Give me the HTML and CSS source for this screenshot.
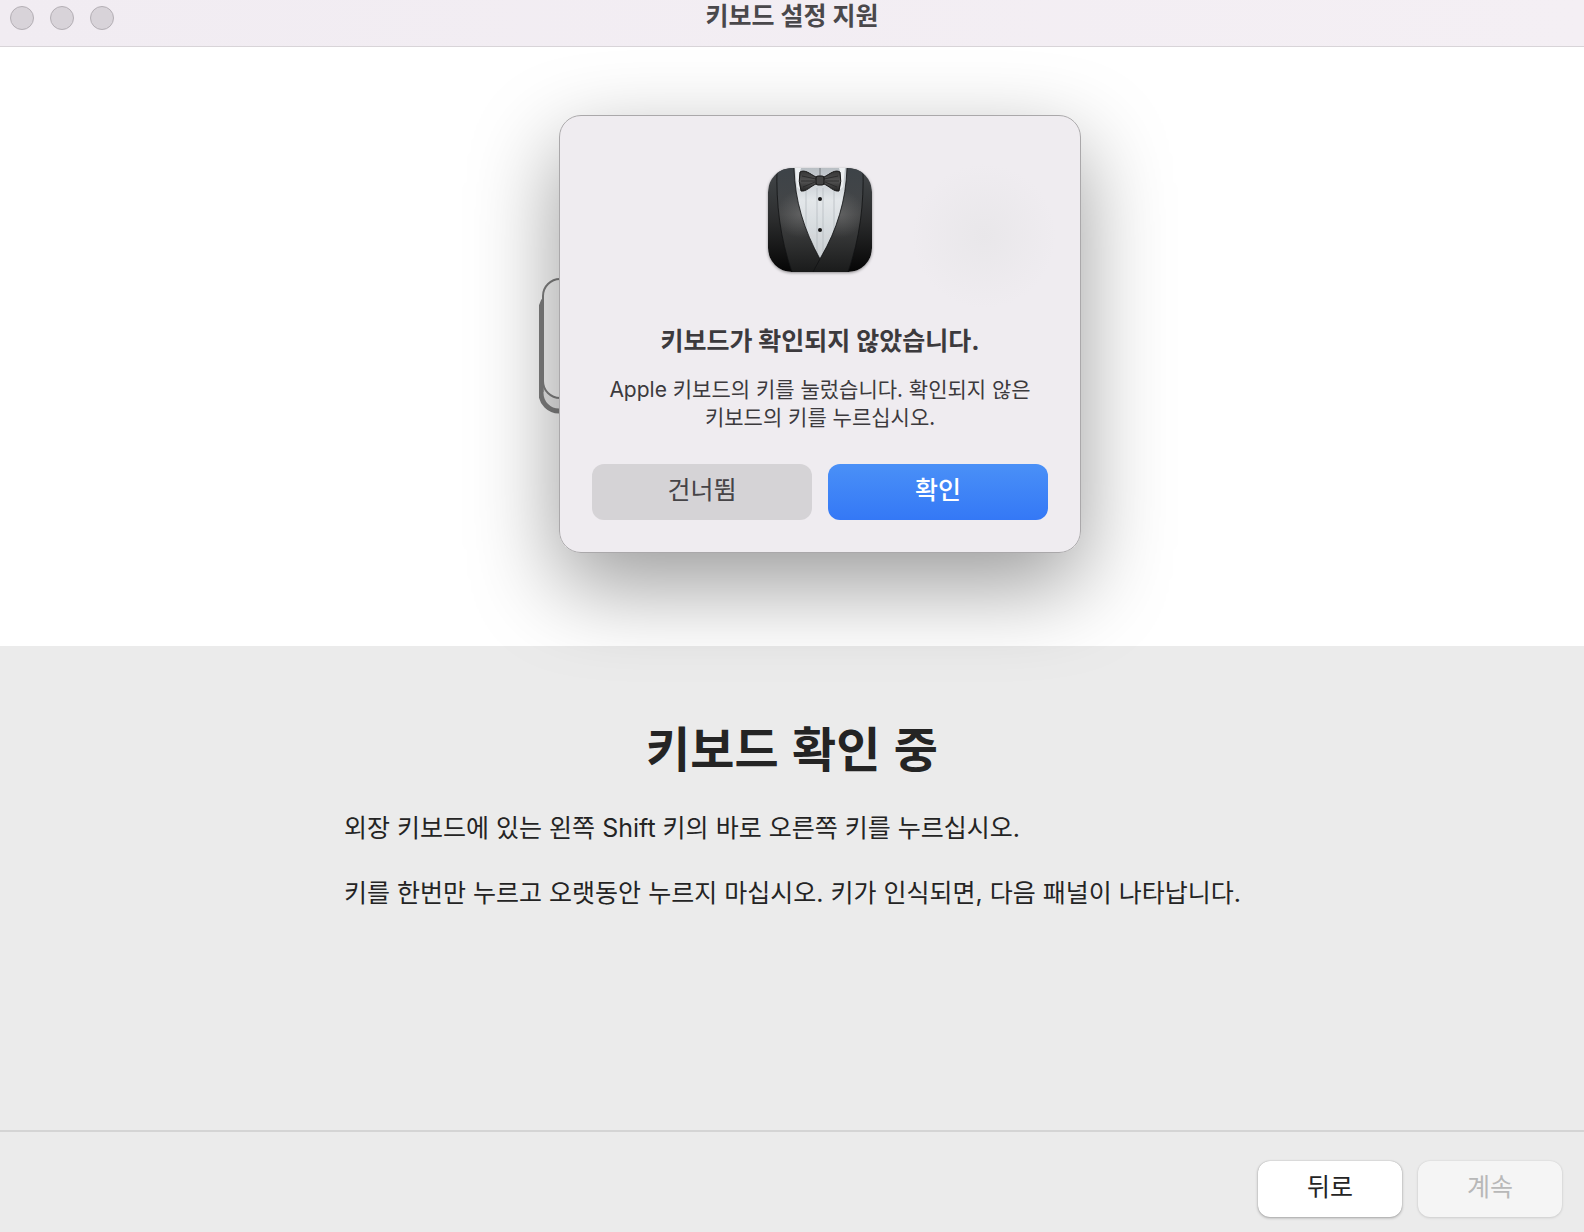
FILE: index.html
```html
<!DOCTYPE html>
<html lang="ko">
<head>
  <meta charset="utf-8">
  <meta name="viewport" content="width=device-width, initial-scale=1">
  <title>키보드 설정 지원</title>
  <link rel="stylesheet" href="styles.css">
</head>
<body>
  <div class="window">
    <header class="titlebar">
      <div class="window-controls">
        <button class="window-control" type="button" aria-label="닫기" disabled></button>
        <button class="window-control" type="button" aria-label="최소화" disabled></button>
        <button class="window-control" type="button" aria-label="확대" disabled></button>
      </div>
      <h1 class="window-title">키보드 설정 지원</h1>
    </header>

    <section class="stage">
      <svg class="keycap" viewBox="0 0 506 136" aria-hidden="true">
        <rect x="2" y="14" width="502" height="119" rx="18" fill="#ececec" stroke="#808080" stroke-width="5"/>
        <path d="M2 30V114" stroke="#808080" stroke-width="5"/>
        <rect x="4" y="1" width="498" height="119" rx="17" fill="#fafafa" stroke="#808080" stroke-width="2"/>
      </svg>
    </section>

    <main class="content">
      <h2 class="heading">키보드 확인 중</h2>
      <div class="instructions">
        <p>외장 키보드에 있는 왼쪽 Shift 키의 바로 오른쪽 키를 누르십시오.</p>
        <p>키를 한번만 누르고 오랫동안 누르지 마십시오. 키가 인식되면, 다음 패널이 나타납니다.</p>
      </div>
    </main>

    <footer class="footer">
      <button class="button button-plain" type="button">뒤로</button>
      <button class="button button-plain" type="button" disabled>계속</button>
    </footer>
  </div>

  <dialog class="alert" open aria-labelledby="alert-title" aria-describedby="alert-message">
    <svg class="alert-icon" viewBox="0 0 104 104" aria-hidden="true">
      <defs>
        <clipPath id="tile"><path d="M24 0H80C96 0 104 8 104 24V80C104 96 96 104 80 104H24C8 104 0 96 0 80V24C0 8 8 0 24 0Z"/></clipPath>
        <linearGradient id="jacket" x2="0" y2="1"><stop offset="0" stop-color="#43474a"/><stop offset=".5" stop-color="#2b2c2d"/><stop offset="1" stop-color="#050505"/></linearGradient>
        <linearGradient id="lapel" x1="0" y1="0" x2="0" y2="104" gradientUnits="userSpaceOnUse"><stop offset="0" stop-color="#3d4348"/><stop offset=".45" stop-color="#454647"/><stop offset="1" stop-color="#1a1b1b"/></linearGradient>
        <linearGradient id="shirt" x2="0" y2="1"><stop offset="0" stop-color="#b9bfc4"/><stop offset=".35" stop-color="#e3e7ea"/><stop offset="1" stop-color="#c9ced1"/></linearGradient>
        <radialGradient id="sheen-left" cx="33" cy="46" r="24" gradientUnits="userSpaceOnUse"><stop stop-color="#888" stop-opacity=".4"/><stop offset="1" stop-color="#888" stop-opacity="0"/></radialGradient>
        <radialGradient id="sheen-right" cx="72" cy="46" r="24" gradientUnits="userSpaceOnUse"><stop stop-color="#888" stop-opacity=".4"/><stop offset="1" stop-color="#888" stop-opacity="0"/></radialGradient>
        <linearGradient id="bow" x2="0" y2="1"><stop offset="0" stop-color="#363636"/><stop offset=".5" stop-color="#555"/><stop offset="1" stop-color="#252525"/></linearGradient>
      </defs>
      <g clip-path="url(#tile)">
        <rect width="104" height="104" fill="url(#jacket)"/>
        <path d="M25 0H80C80 32 69 66 52 92C36 66 26 32 25 0Z" fill="url(#shirt)"/>
        <path d="M38 20V64M49 20V86M55 20V86M66 20V64" stroke="#aeb4b9" stroke-width="1" opacity=".65"/>
        <path d="M52 0V8" stroke="#73777a" stroke-width="1"/>
        <path d="M27 0H33L31 7L35 24L29 19Z" fill="#edf0f2"/>
        <path d="M77 0H71L73 7L69 24L75 19Z" fill="#edf0f2"/>
        <path d="M9 0H26C27 33 36 62 52 91L46 104H24C12 70 8 36 9 0Z" fill="url(#lapel)"/>
        <path d="M9 0H26C27 33 36 62 52 91L46 104H24C12 70 8 36 9 0Z" fill="url(#sheen-left)"/>
        <path d="M95 0H79C78 32 69 62 53 89L45 104H80C92 70 96 36 95 0Z" fill="url(#lapel)"/>
        <path d="M95 0H79C78 32 69 62 53 89L45 104H80C92 70 96 36 95 0Z" fill="url(#sheen-right)"/>
        <path d="M26 0C27 33 36 62 52 91M79 0C78 32 69 62 53 89L45 104M9 0C8 36 12 70 24 104M95 0C96 36 92 70 80 104" fill="none" stroke="#111314" stroke-width="1" opacity=".8"/>
        <path d="M32 4C37 1 42 6 48 9H56C62 6 67 1 72 4Q74 13 71 23C66 24 61 18 56 16H48C43 18 38 24 33 23Q30 13 32 4Z" fill="url(#bow)" stroke="#191919" stroke-width="1"/>
        <path d="M34 8L48 11M33 13H47M35 19L47 14M70 8L56 11M71 13H57M69 19L57 14" stroke="#222" stroke-width="1" opacity=".7"/>
        <rect x="48" y="8" width="8" height="9" rx="2" fill="#444" stroke="#151515"/>
        <circle cx="52" cy="31" r="2" fill="#141414"/>
        <circle cx="52" cy="62" r="2" fill="#141414"/>
      </g>
    </svg>
    <h2 class="alert-title" id="alert-title">키보드가 확인되지 않았습니다.</h2>
    <p class="alert-message" id="alert-message"><span class="latin" lang="en">Apple</span> 키보드의 키를 눌렀습니다. 확인되지 않은 키보드의 키를 누르십시오.</p>
    <div class="alert-actions">
      <button class="button button-secondary" type="button">건너뜀</button>
      <button class="button button-primary" type="button">확인</button>
    </div>
  </dialog>
</body>
</html>
```

FILE: styles.css
```css
* {
  box-sizing: border-box;
}

body {
  margin: 0;
  position: relative;
  background: #ebebeb;
  color: #242424;
  font-family: Inter, "Noto Sans CJK KR", sans-serif;
  font-size: 25px;
  line-height: 32px;
}

h1,
h2,
p {
  margin: 0;
}

.window {
  display: flex;
  flex-direction: column;
  min-height: 100vh;
}

/* Title bar */

.titlebar {
  display: grid;
  grid-template-columns: 1fr auto 1fr;
  align-items: start;
  height: 47px;
  background: linear-gradient(90deg, #f1ecf2, #f4eff4);
  border-bottom: 1px solid #d8d4d8;
}

.window-controls {
  display: flex;
  gap: 16px;
  padding: 6px 10px;
}

.window-control {
  width: 24px;
  height: 24px;
  padding: 0;
  border: 1px solid #b4afb5;
  border-radius: 50%;
  background: #d8d3d9;
}

.window-title {
  color: #4a484b;
  font-size: 25px;
  font-weight: 700;
  line-height: 32px;
}

/* Illustration */

.stage {
  display: flex;
  align-items: center;
  justify-content: center;
  height: 599px;
  padding-bottom: 2px;
  background: #fff;
}

.keycap {
  width: 506px;
  height: 136px;
}

/* Instructions */

.content {
  display: flex;
  flex: 1;
  flex-direction: column;
  align-items: center;
  gap: 34px;
  padding: 68px 24px;
}

.heading {
  font-family: "Noto Sans CJK KR", sans-serif;
  font-size: 48px;
  font-weight: 700;
  line-height: 64px;
}

.instructions {
  display: flex;
  flex-direction: column;
  gap: 33px;
  width: 100%;
  max-width: 960px;
  padding-left: 32px;
  word-break: keep-all;
}

/* Footer */

.footer {
  display: flex;
  justify-content: flex-end;
  gap: 16px;
  padding: 29px 22px 15px;
  border-top: 2px solid #d4d4d4;
}

.button {
  height: 56px;
  padding: 0 8px 4px;
  border: 0;
  border-radius: 12px;
  font: inherit;
}

.button-plain {
  width: 144px;
  background: #fff;
  color: #242424;
  box-shadow: 0 0 1px rgba(0, 0, 0, 0.3), 0 1px 3px rgba(0, 0, 0, 0.3);
}

.button-plain:disabled {
  background: #f5f5f5;
  color: #b8b8b8;
  box-shadow: 0 0 2px rgba(0, 0, 0, 0.1), 0 1px 3px rgba(0, 0, 0, 0.1);
}

/* Alert */

.alert {
  position: absolute;
  top: 115px;
  left: calc(50% + 28px);
  transform: translateX(-50%);
  display: flex;
  flex-direction: column;
  align-items: center;
  width: 522px;
  margin: 0;
  padding: 52px 32px 32px;
  border: 1px solid #aaa8aa;
  border-radius: 22px;
  background: radial-gradient(circle at 424px 120px, #e9e7ea, #efecf0 72px);
  color: #3c3a3d;
  box-shadow: 0 32px 88px rgba(0, 0, 0, 0.4);
}

.alert-icon {
  width: 104px;
  height: 104px;
  border-radius: 24px;
  box-shadow: 0 1px 3px rgba(0, 0, 0, 0.4);
}

.alert-title {
  margin-top: 53px;
  font-size: 25px;
  font-weight: 700;
  line-height: 32px;
}

.alert-message {
  margin-top: 17px;
  font-family: "Noto Sans CJK KR", sans-serif;
  font-size: 21px;
  line-height: 28px;
  text-align: center;
  word-break: keep-all;
}

.latin {
  font-family: Inter, sans-serif;
  line-height: 1;
}

.alert-actions {
  display: grid;
  grid-template-columns: 1fr 1fr;
  gap: 16px;
  width: 100%;
  margin-top: 34px;
}

.button-secondary {
  background: #d5d3d6;
  color: #464447;
}

.button-primary {
  background: linear-gradient(#4a90f7, #3478f6);
  color: #fff;
  font-weight: 500;
}
```
